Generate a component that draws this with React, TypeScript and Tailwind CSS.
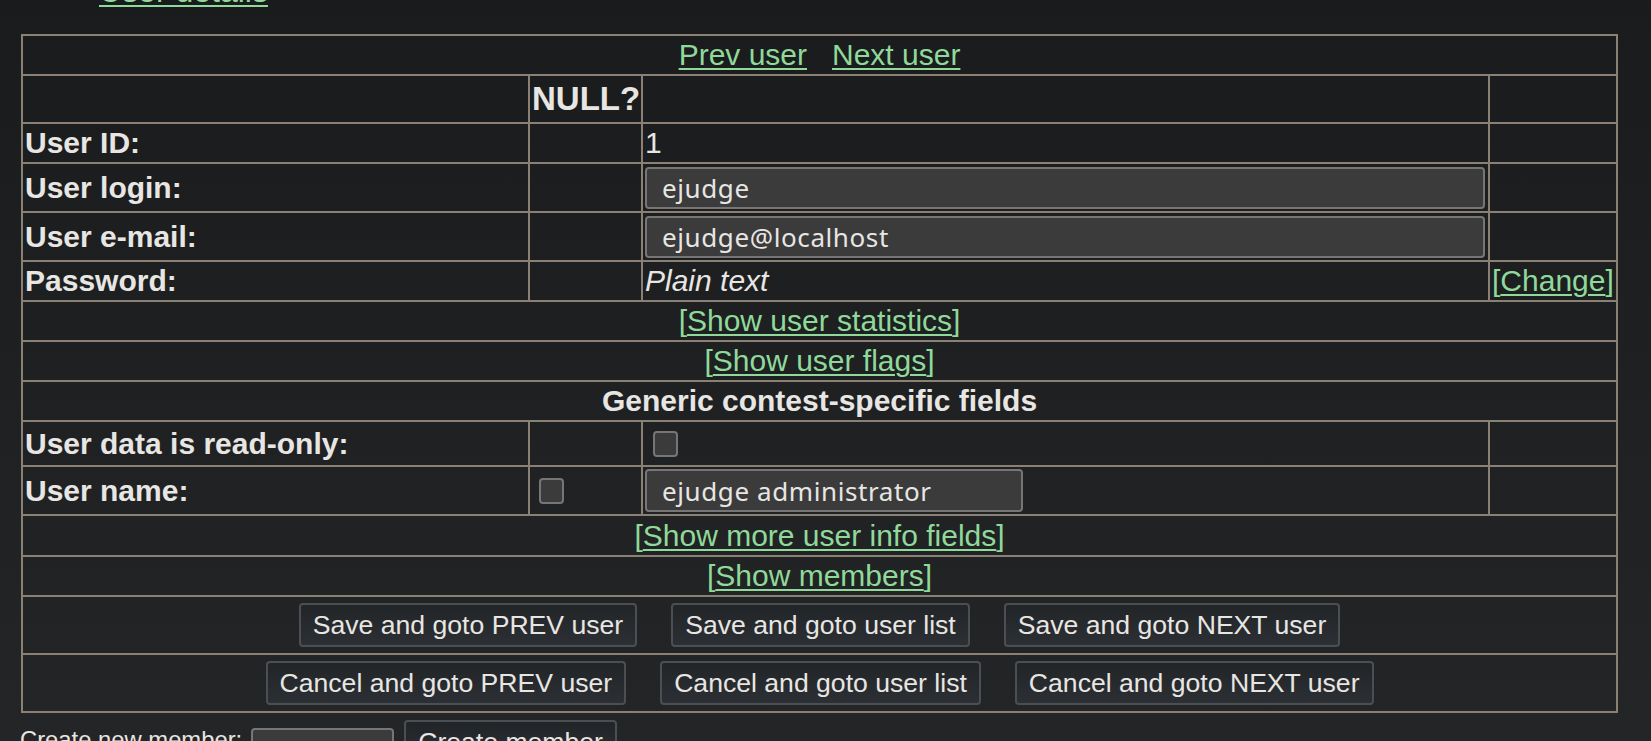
import React from "react";

const cell = "border-2 border-[#8a8174] p-[2px] align-middle";
const linkCls = "text-[#8fd99a] underline decoration-2 underline-offset-[3px]";

const Bracket = ({ label }: { label: string }) => (
	<span className="text-[#8fd99a]">
		[<a href="#" className={linkCls}>{label}</a>]
	</span>
);

const TextInput = ({ value, wide }: { value: string; wide?: boolean }) => (
	<input
		type="text"
		defaultValue={value}
		className={
			wide
				? "block h-[42px] w-[840px] rounded-[4px] border-2 border-[#767676] bg-[#3b3b3b] pl-[15px] font-['Noto_Sans',sans-serif] text-[26px] tracking-[0.6px] text-[#e8e6e3] outline-none"
				: "block h-[43px] w-[378px] rounded-[4px] border-2 border-[#767676] bg-[#3b3b3b] pl-[15px] font-['Noto_Sans',sans-serif] text-[26px] tracking-[0.6px] text-[#e8e6e3] outline-none"
		}
	/>
);

const Check = ({ ml }: { ml: string }) => (
	<input
		type="checkbox"
		className={`block h-[26px] w-[25px] appearance-none rounded-[4px] border-2 border-[#767676] bg-[#3b3b3b] ${ml}`}
	/>
);

const Btn = ({ label }: { label: string }) => (
	<button className="h-[44px] rounded-[4px] border-2 border-[#4b4f53] bg-linear-to-b from-[#222528] to-[#2c2f33] px-[12px] text-[26.6px] leading-[normal] text-[#e8e6e3]">
		{label}
	</button>
);

// label | NULL? | value | extra
const FieldRow = ({
	h,
	label,
	nullCell,
	value,
	extra,
}: {
	h: string;
	label: string;
	nullCell?: React.ReactNode;
	value?: React.ReactNode;
	extra?: React.ReactNode;
}) => (
	<tr className={h}>
		<td className={`${cell} font-bold`}>{label}</td>
		<td className={cell}>{nullCell}</td>
		<td className={cell}>{value}</td>
		<td className={cell}>{extra}</td>
	</tr>
);

const WideRow = ({ h, children, bold }: { h: string; children: React.ReactNode; bold?: boolean }) => (
	<tr className={h}>
		<td colSpan={4} className={`${cell} text-center ${bold ? "font-bold" : ""}`}>
			{children}
		</td>
	</tr>
);

export default function App() {
	return (
		<div className="h-screen overflow-hidden bg-linear-to-b from-[#1a1b1d] to-[#232527] font-['Liberation_Sans',Arial,sans-serif] text-[30px] leading-[normal] text-[#e8e6e3]">
			{/* heading link, scrolled mostly out of view */}
			<div className="h-[34px] overflow-hidden pl-[99px]">
				<a href="#" className={`-mt-[25px] block w-fit text-[32px] leading-[32px] ${linkCls}`}>
					User details
				</a>
			</div>

			<table className="ml-[21px] w-[1595px] table-fixed border-collapse border-2 border-[#8a8174]">
				<colgroup>
					<col className="w-[507px]" />
					<col className="w-[113px]" />
					<col className="w-[847px]" />
					<col className="w-[128px]" />
				</colgroup>
				<tbody>
					<WideRow h="h-[40px]">
						<a href="#" className={linkCls}>Prev user</a>
						<a href="#" className={`ml-[25px] ${linkCls}`}>Next user</a>
					</WideRow>
					<tr className="h-[48px]">
						<td className={cell}></td>
						<th className={`${cell} text-center text-[33px] font-bold`}>NULL?</th>
						<td className={cell}></td>
						<td className={cell}></td>
					</tr>
					<FieldRow h="h-[40px]" label="User ID:" value="1" />
					<FieldRow h="h-[49px]" label="User login:" value={<TextInput value="ejudge" wide />} />
					<FieldRow h="h-[49px]" label="User e-mail:" value={<TextInput value="ejudge@localhost" wide />} />
					<FieldRow
						h="h-[40px]"
						label="Password:"
						value={<i>Plain text</i>}
						extra={<Bracket label="Change" />}
					/>
					<WideRow h="h-[40px]">
						<Bracket label="Show user statistics" />
					</WideRow>
					<WideRow h="h-[40px]">
						<Bracket label="Show user flags" />
					</WideRow>
					<WideRow h="h-[40px]" bold>
						Generic contest-specific fields
					</WideRow>
					<FieldRow h="h-[45px]" label="User data is read-only:" value={<Check ml="ml-[8px]" />} />
					<FieldRow
						h="h-[48px]"
						label="User name:"
						nullCell={<Check ml="ml-[7px]" />}
						value={<TextInput value="ejudge administrator" />}
					/>
					<WideRow h="h-[41px]">
						<Bracket label="Show more user info fields" />
					</WideRow>
					<WideRow h="h-[40px]">
						<Bracket label="Show members" />
					</WideRow>
					<WideRow h="h-[58px]">
						<div className="flex justify-center gap-[34px]">
							<Btn label="Save and goto PREV user" />
							<Btn label="Save and goto user list" />
							<Btn label="Save and goto NEXT user" />
						</div>
					</WideRow>
					<WideRow h="h-[58px]">
						<div className="flex justify-center gap-[34px]">
							<Btn label="Cancel and goto PREV user" />
							<Btn label="Cancel and goto user list" />
							<Btn label="Cancel and goto NEXT user" />
						</div>
					</WideRow>
				</tbody>
			</table>

			{/* new member form */}
			<div className="ml-[20px] mt-[7px] flex items-start text-[23.8px]">
				<span className="mt-[6px]">Create new member:</span>
				<div className="ml-[9px] mt-[8px] flex h-[40px] w-[143px] items-center justify-end rounded-[4px] border-2 border-[#767676] bg-[#3b3b3b] pr-[10px]">
					<svg width="16" height="10" viewBox="0 0 16 10" fill="none" stroke="#e8e6e3" strokeWidth="2">
						<path d="M2 2l6 6 6-6" />
					</svg>
				</div>
				<div className="ml-[10px]">
					<Btn label="Create member" />
				</div>
			</div>
		</div>
	);
}
